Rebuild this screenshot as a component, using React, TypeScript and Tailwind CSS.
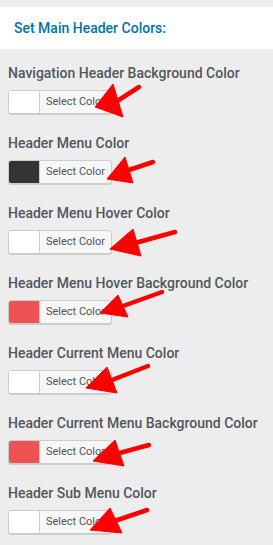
import { useState } from 'react';

interface ColorRowProps {
  label: string;
  swatch: string;
}

const rows: ColorRowProps[] = [
  { label: 'Navigation Header Background Color', swatch: '#ffffff' },
  { label: 'Header Menu Color', swatch: '#333333' },
  { label: 'Header Menu Hover Color', swatch: '#ffffff' },
  { label: 'Header Menu Hover Background Color', swatch: '#ee5253' },
  { label: 'Header Current Menu Color', swatch: '#ffffff' },
  { label: 'Header Current Menu Background Color', swatch: '#ee5253' },
  { label: 'Header Sub Menu Color', swatch: '#ffffff' },
];

// tip, head top, head bottom, tail
const arrows = [
  [[95, 107], [113, 84], [123, 117], [139, 87]],
  [[107, 179], [125, 157], [133, 183], [153, 162]],
  [[110, 249], [133, 229], [141, 256], [175, 232]],
  [[100, 313], [118, 295], [128, 317], [162, 292]],
  [[86, 388], [107, 367], [117, 393], [148, 366]],
  [[93, 461], [115, 440], [124, 466], [149, 445]],
  [[90, 530], [110, 508], [122, 533], [147, 510]],
];

function ColorRow({ label, swatch }: ColorRowProps) {
  const [color] = useState(swatch);

  return (
    <div className="pb-[19px]">
      <div className="text-[14px] leading-[20px] font-medium text-[#50575e] mb-[7px]">{label}</div>
      <button className="flex h-[24px] w-[104px] items-stretch rounded-[3px] border border-[#cccccc] bg-[#f7f7f7] shadow-[0_1px_0_#cccccc] overflow-hidden">
        <span className="w-[31px] border-r border-[#cccccc]" style={{ backgroundColor: color }} />
        <span className="flex-1 flex items-center justify-center text-[11px] text-[#555555]">Select Color</span>
      </button>
    </div>
  );
}

export default function App() {
  return (
    <div className="relative w-[273px] h-[545px] overflow-hidden bg-[#ededed] pt-[7px]" style={{ fontFamily: 'Roboto, "Noto Sans", sans-serif' }}>
      <div className="bg-white h-[42px] flex items-center px-[14px]">
        <h2 className="text-[14px] font-medium text-[#0073aa]">Set Main Header Colors:</h2>
      </div>

      <div className="px-[8px] pt-[14px]">
        {rows.map((row) => (
          <ColorRow key={row.label} {...row} />
        ))}
      </div>

      {/* Red annotation arrows */}
      <svg className="absolute inset-0 pointer-events-none" width="273" height="545" viewBox="0 0 273 545">
        {arrows.map(([tip, top, bottom, tail], i) => {
          const mx = (top[0] + bottom[0]) / 2;
          const my = (top[1] + bottom[1]) / 2;
          return (
            <g key={i} fill="#ff0000" stroke="#ff0000">
              <line x1={tail[0]} y1={tail[1]} x2={mx} y2={my} strokeWidth="4.5" strokeLinecap="round" />
              <polygon points={`${tip[0]},${tip[1]} ${top[0]},${top[1]} ${bottom[0]},${bottom[1]}`} strokeWidth="1" strokeLinejoin="round" />
            </g>
          );
        })}
      </svg>
    </div>
  );
}
